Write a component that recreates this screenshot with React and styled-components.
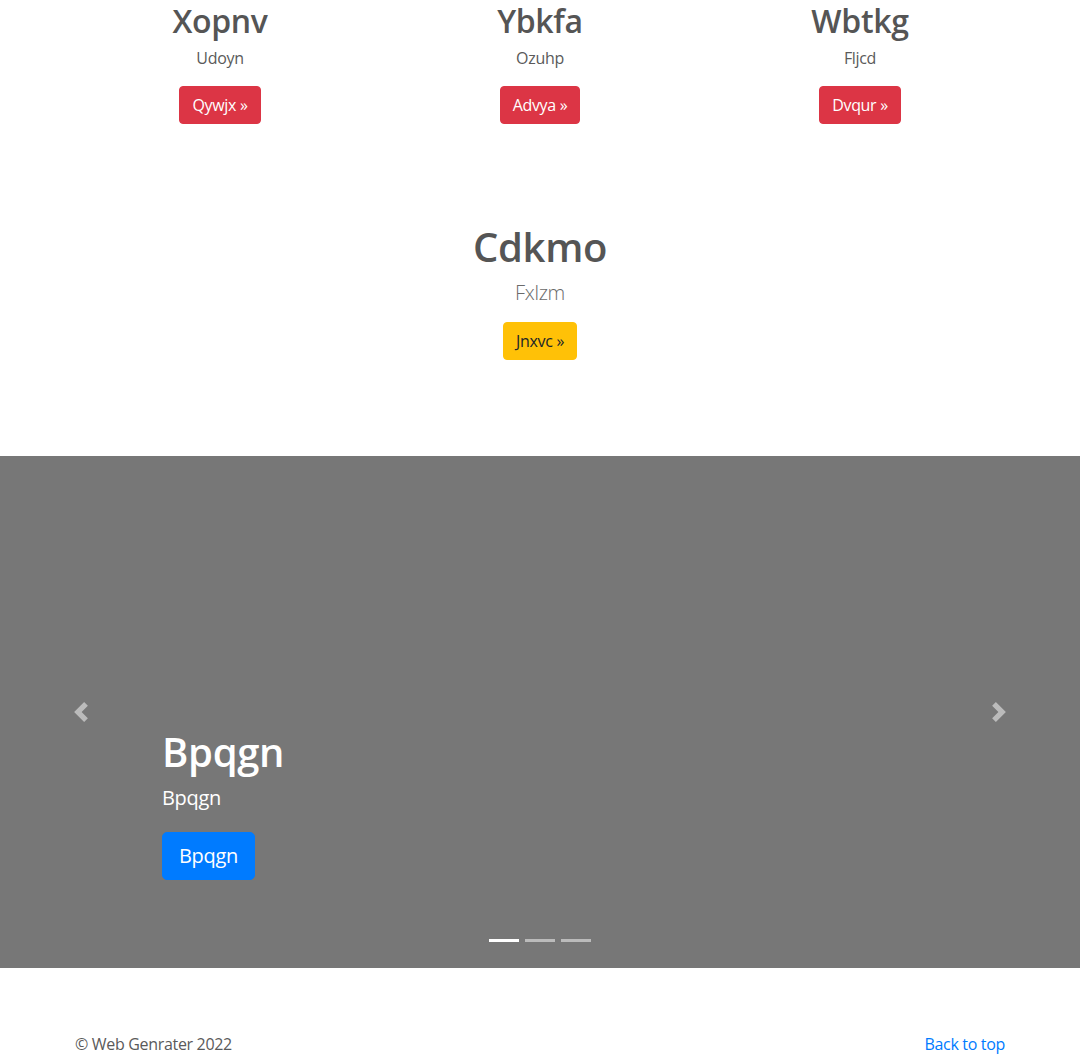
import React from 'react';
import styled, { createGlobalStyle } from 'styled-components';

const GlobalStyle = createGlobalStyle`
  * { box-sizing: border-box; }
  body {
    margin: 0;
    font-family: "Open Sans", "Noto Sans", sans-serif;
    font-size: 16px;
    line-height: 1.5;
    letter-spacing: -0.02em;
    color: #5a5a5a;
    background: #fff;
  }
`;

const Container = styled.div`
  width: 960px;
  margin: 0 auto;
  padding: 0 15px;
`;

const Row = styled.div`
  display: grid;
  grid-template-columns: repeat(3, 1fr);
  margin: 0 -15px;
  padding-top: 2px;
`;

const Col = styled.div`
  padding: 0 15px;
  text-align: center;
`;

const Heading = styled.h2`
  margin: 0 0 8px;
  font-size: ${p => (p.$big ? '40px' : '32px')};
  font-weight: 600;
  line-height: 1.2;
  color: #555;
`;

const ColHeading = styled(Heading)`
  margin-bottom: 6px;
`;

const Text = styled.p`
  margin: 0 0 16px;
`;

const Lead = styled.p`
  margin: 0 0 15px;
  font-size: 20px;
  font-weight: 300;
  line-height: 1.4;
  color: #6a6a6a;
`;

const colors = {
  danger: { bg: '#dc3545', fg: '#fff' },
  warning: { bg: '#ffc107', fg: '#212529' },
  primary: { bg: '#007bff', fg: '#fff' },
};

const Btn = styled.a`
  display: inline-block;
  padding: ${p => (p.$lg ? '8px 16px' : '6px 12px')};
  font-size: ${p => (p.$lg ? '20px' : '16px')};
  line-height: 1.5;
  border: 1px solid ${p => colors[p.$variant].bg};
  border-radius: ${p => (p.$lg ? '5px' : '4px')};
  background: ${p => colors[p.$variant].bg};
  color: ${p => colors[p.$variant].fg};
  text-decoration: none;
  cursor: pointer;
`;

const Feature = styled.section`
  margin-top: 99px;
  text-align: center;
`;

const Carousel = styled.div`
  position: relative;
  margin-top: 96px;
  height: 512px;
  background: #777;
  display: flex;
  flex-direction: column;
  justify-content: flex-end;
  padding: 0 15% 48px;
`;

const Caption = styled.div`
  padding: 20px 0;
  color: #fff;
  text-align: left;
`;

const CaptionTitle = styled.h1`
  margin: 0 0 8px;
  font-size: 40px;
  font-weight: 600;
  line-height: 1.2;
`;

const CaptionText = styled.p`
  margin: 0 0 20px;
  font-size: 20px;
  line-height: 1.4;
`;

const CaptionAction = styled.div`
  display: flex;
  margin-bottom: 20px;
`;

const Control = styled.a`
  position: absolute;
  top: 0;
  bottom: 0;
  ${p => (p.$side === 'prev' ? 'left: 0;' : 'right: 0;')}
  width: 15%;
  display: flex;
  align-items: center;
  justify-content: center;
  opacity: 0.5;
  cursor: pointer;
`;

const Indicators = styled.ol`
  position: absolute;
  left: 0;
  right: 0;
  bottom: 26px;
  display: flex;
  justify-content: center;
  gap: 6px;
  margin: 0;
  padding: 0;
  list-style: none;
`;

const Dot = styled.li`
  width: 30px;
  height: 3px;
  background: #fff;
  opacity: ${p => (p.$active ? 1 : 0.5)};
`;

const Footer = styled.footer`
  padding-top: 64px;
`;

const FooterRow = styled.div`
  display: flex;
  justify-content: space-between;
  align-items: center;
`;

const FooterText = styled.p`
  margin: 0;
`;

const Link = styled.a`
  color: #007bff;
  text-decoration: none;
`;

const Chevron = ({ dir }) => (
  <svg width="20" height="20" viewBox="0 0 8 8" fill="#fff">
    {dir === 'prev' ? (
      <path d="M5.25 0l-4 4 4 4 1.5-1.5-2.5-2.5 2.5-2.5-1.5-1.5z" />
    ) : (
      <path d="M2.75 0l-1.5 1.5 2.5 2.5-2.5 2.5 1.5 1.5 4-4-4-4z" />
    )}
  </svg>
);

const cols = [
  { title: 'Xopnv', text: 'Udoyn', btn: 'Qywjx' },
  { title: 'Ybkfa', text: 'Ozuhp', btn: 'Advya' },
  { title: 'Wbtkg', text: 'Fljcd', btn: 'Dvqur' },
];

export default function App() {
  return (
    <>
      <GlobalStyle />
      <Container>
        <Row>
          {cols.map(c => (
            <Col key={c.title}>
              <ColHeading>{c.title}</ColHeading>
              <Text>{c.text}</Text>
              <Btn $variant="danger">{c.btn} &raquo;</Btn>
            </Col>
          ))}
        </Row>
        <Feature>
          <Heading $big>Cdkmo</Heading>
          <Lead>Fxlzm</Lead>
          <Btn $variant="warning">Jnxvc &raquo;</Btn>
        </Feature>
      </Container>

      <Carousel>
        <Caption>
          <CaptionTitle>Bpqgn</CaptionTitle>
          <CaptionText>Bpqgn</CaptionText>
          <CaptionAction>
            <Btn $variant="primary" $lg>Bpqgn</Btn>
          </CaptionAction>
        </Caption>
        <Control $side="prev"><Chevron dir="prev" /></Control>
        <Control $side="next"><Chevron dir="next" /></Control>
        <Indicators>
          <Dot $active />
          <Dot />
          <Dot />
        </Indicators>
      </Carousel>

      <Footer>
        <Container>
          <FooterRow>
            <FooterText>&copy; Web Genrater 2022</FooterText>
            <Link>Back to top</Link>
          </FooterRow>
        </Container>
      </Footer>
    </>
  );
}
